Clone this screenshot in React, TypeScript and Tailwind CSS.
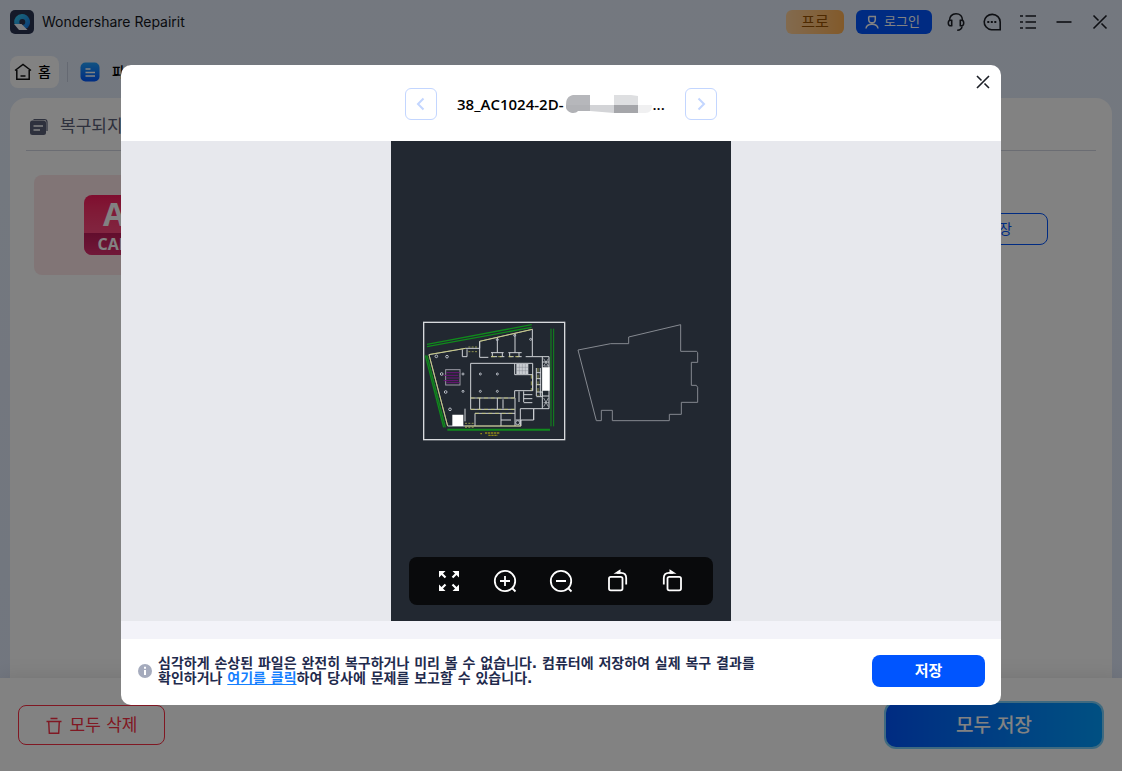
import type { ReactNode } from "react";

type IconButtonProps = {
    label: string;
    className?: string;
    children: ReactNode;
};

const IconButton = ({ label, className = "", children }: IconButtonProps) => (
    <button type="button" aria-label={label} className={`flex size-6 items-center justify-center ${className}`}>
        <svg viewBox="0 0 24 24" className="size-6" fill="none" stroke="currentColor" strokeWidth="1.6">
            {children}
        </svg>
    </button>
);

const Logo = () => (
    <svg viewBox="0 0 24 24" className="size-6">
        <defs>
            <linearGradient id="logoRing" x1="0" y1="0" x2="1" y2="1">
                <stop offset="0" stopColor="#38d6f5" />
                <stop offset="1" stopColor="#1370e8" />
            </linearGradient>
        </defs>
        <rect width="24" height="24" rx="5" fill="#2a3352" />
        <path d="M12 4a8 8 0 0 1 6 13.300l-2.600 1.700L4.200 13.500A8 8 0 0 1 12 4Z" fill="url(#logoRing)" />
        <circle cx="12.300" cy="12" r="3" fill="#2a3352" />
        <path d="M4 14h7.500l6 6h-8.500Z" fill="#f4f7ff" />
    </svg>
);

const TitleBar = () => (
    <header className="flex h-11 items-center justify-between px-[10px]">
        <div className="flex items-center gap-2">
            <Logo />
            <h1 className="font-['Inter','Liberation_Sans',sans-serif] text-sm text-[#15171c]">Wondershare Repairit</h1>
        </div>
        <div className="flex items-center gap-3 text-[#1c1f26]">
            <button type="button" className="h-6 w-[58px] rounded-md bg-linear-to-r from-[#ffd19a] to-[#ffb052] text-[15px] leading-6 text-[#9a5200]">
                프로
            </button>
            <button type="button" className="flex h-6 w-[76px] items-center justify-center gap-1 rounded-md bg-[#0055ff] pr-1 text-[13px] leading-6 text-white">
                <svg viewBox="0 0 16 16" className="size-4" fill="none" stroke="currentColor" strokeWidth="1.500">
                    <path d="M4.700 2.500h7.300M4.700 2.500v3a3.300 3.300 0 0 0 6.600 0v-3M2 14.500c.3-3 2.600-4.300 6-4.300s5.700 1.300 6 4.300" />
                </svg>
                로그인
            </button>
            <IconButton label="고객 지원">
                <path d="M5.500 10.500C5.500 6.500 8 3.800 12 3.800s6.500 2.700 6.500 6.700" />
                <path d="M7.700 10.300v5.400c-2.300.4-3.400-.6-3.400-2.700s1.100-3.100 3.400-2.700ZM16.300 10.300v5.400c2.300.4 3.400-.6 3.400-2.700s-1.100-3.100-3.400-2.700Z" />
                <path d="M18 16.500c-.3 2.400-1.500 3.700-4.800 3.700" />
            </IconButton>
            <IconButton label="피드백">
                <path d="M20.200 19.700H11.500a8 7.700 0 1 1 8.700-7.700Z" />
                <path d="M7.300 12h2M10.800 12h2M14.300 12h2" strokeWidth="1.900" />
            </IconButton>
            <IconButton label="메뉴">
                <path d="M4 6h3M9.500 6H20M4 12h3M9.500 12H20M4 18h3M9.500 18H20" strokeWidth="1.700" />
            </IconButton>
            <IconButton label="최소화">
                <path d="M4.500 12h15" />
            </IconButton>
            <IconButton label="닫기">
                <path d="m5.500 18.500 13-13M5.500 5.500l5 5M13.500 13.500l5 5" />
            </IconButton>
        </div>
    </header>
);

const Tabs = () => (
    <nav className="flex items-center px-[10px] pt-3 pb-[10px] text-sm font-medium text-black">
        <button type="button" className="flex h-8 w-[49px] items-center gap-[6px] rounded-lg bg-white pl-1">
            <svg viewBox="0 0 18 18" className="size-[18px] shrink-0" fill="none" stroke="#111" strokeWidth="1.500">
                <path d="M1 7.500 9 1.500l8 6M2.800 7v9.300h12.400V7M6.500 13h5" />
            </svg>
            홈
        </button>
        <span className="mx-2 h-5 w-px bg-[#c6cfe0]" />
        <button type="button" className="flex items-center gap-3 pl-1">
            <svg viewBox="0 0 20 20" className="size-5">
                <defs>
                    <linearGradient id="fileTab" x1="0" y1="0" x2="0" y2="1">
                        <stop offset="0" stopColor="#22a2ff" />
                        <stop offset="1" stopColor="#0058ff" />
                    </linearGradient>
                </defs>
                <rect x=".5" y=".5" width="19" height="19" rx="5" fill="url(#fileTab)" />
                <path d="M5.500 7h5M5.500 10.500h9.500M5.500 14h9.500" stroke="#fff" strokeWidth="1.500" />
            </svg>
            파일 복구
        </button>
    </nav>
);

const FileList = () => (
    <main className="mx-[10px] flex-1 rounded-t-2xl bg-white px-4 pt-3">
        <div className="flex h-[41px] items-center gap-3 border-b border-[#d3d6e2] pb-[6px] pl-1 text-[17px] text-[#5b6078]">
            <svg viewBox="0 0 18 18" className="size-[18px]">
                <path d="M3.500 1.500h11a2.500 2.500 0 0 1 2.500 2.500v9" fill="none" stroke="#5b6078" strokeWidth="1.200" />
                <rect y="2.500" width="16" height="14.500" rx="2.500" fill="#5b6078" />
                <path d="M3.500 8h9.500M3.500 12h6.500" stroke="#fff" strokeWidth="1.600" />
            </svg>
            복구되지 않은 파일
        </div>
        <div className="flex items-start justify-between pt-6 pr-12 pl-2">
            <div className="flex h-[100px] w-40 items-center justify-center rounded-lg bg-[#fde6e8]">
                <div className="flex size-[60px] flex-col rounded-lg bg-linear-to-b from-[#fa1a5c] to-[#ff5b92] text-center font-['Open_Sans',sans-serif] font-bold text-white">
                    <span className="text-[32px] leading-[38px]">A</span>
                    <span className="rounded-b-lg bg-linear-to-b from-[#c01a58] to-[#de3070] text-base leading-[22px]">CAD</span>
                </div>
            </div>
            <button type="button" className="mt-[38px] h-8 w-[98px] rounded-lg border border-[#0055ff] text-sm text-[#0055ff]">
                저장
            </button>
        </div>
    </main>
);

const ActionBar = () => (
    <footer className="z-10 flex h-[93px] items-center justify-between bg-white px-[18px] shadow-[0_0_20px_rgba(0,0,0,0.12)]">
        <button type="button" className="flex h-10 w-[147px] items-center justify-center gap-2 rounded-lg border border-[#fb2f45] pt-[2px] text-[17px] text-[#fb2f45]">
            <svg viewBox="0 0 16 18" className="h-[18px] w-4" fill="none" stroke="currentColor" strokeWidth="1.400">
                <path d="M4.500 1.500h7M.5 4.500h15M2.700 4.500l.6 11.800h9.400l.6-11.800" />
            </svg>
            모두 삭제
        </button>
        <button type="button" className="h-12 w-[220px] rounded-xl bg-[#7cd0fb] p-[2px] text-[19px] font-medium text-white">
            <span className="flex h-full items-center justify-center rounded-[10px] bg-linear-to-r from-[#0055ff] to-[#009dff] pt-[2px]">모두 저장</span>
        </button>
    </footer>
);

// floor plan on the left sheet, building outline on the right
const Drawing = () => (
    <svg viewBox="0 0 876 408" className="h-[136px] w-[292px] shrink-0" fill="none" strokeWidth="3" role="img" aria-label="CAD">
        <rect x="26" y="31" width="423" height="352" stroke="#d8dadd" strokeWidth="4" />
        <g stroke="#108a1c" strokeWidth="3">
            <path d="M36 97 350 38M36 104l314-58" strokeWidth="4" />
            <path d="m31 130 55 216M36 130l55 216" strokeWidth="4" />
            <path d="M408 50v293M416 50v293" />
            <path d="M97 353h308" strokeWidth="6" />
        </g>
        <g stroke="#cfd2d6">
            <path d="M42 128 152 109h42V88L352 52v82M352 134h50v156h-46v34h-38v18H98L42 128" />
            <path d="M194 88v48h26M247 76v46M300 64v58M228 122h38M280 122h40M228 134h18M254 134h14M282 134h14M304 134h16M232 122v12M262 122v12M284 122v12M312 122v12M352 134h-20M142 112v22h14v-22" />
            <path d="M167 154h186v82H299v22H167ZM299 154v34h54M353 188v48" />
            <path d="M167 258v34h132M194 258v34M247 258v34M264 262v28M150 290v38M180 304v38M180 304h120M258 304v38M300 258v84M258 324h30M302 324h14v18M316 290v52M316 290h40" />
            <path d="M312 238v32M326 238v32M326 248h26M326 260h26M326 272h26M364 168v84M376 168v84M364 182h14M364 200h14M364 218h14M364 240h18v14h-18M382 134v156M382 150h20M382 252h20M356 290v34" />
            <path d="M386 140l14 22M400 140l-14 22M386 258l14 26M400 258l-14 26M386 162h16M386 272h16" strokeWidth="2" />
            <rect x="92" y="173" width="43" height="46" stroke="#9a9aa4" />
        </g>
        <g stroke="#c6c75e" strokeWidth="2">
            <path d="m42 128 56 214M44 127l108-18M194 88l158-36M150 342h168" />
            <path d="M228 134h38M280 134h40M167 258h132M167 292h132M180 304h120M349 188v48M369 168v84" strokeDasharray="12 8" />
            <path d="M160 105h30M160 119h30M150 334h28M150 346h28" strokeDasharray="6 4" />
        </g>
        <path d="M94 182h40M86 190h44M94 198h40M86 206h44M94 212h40" stroke="#6d147a" />
        <path d="M112 308h33v34h-33ZM382 166h22v70h-22Z" fill="#fff" />
        <path d="M304 156h36v30h-36Z" fill="#c9cdd2" />
        <path d="M313 156v30M322 156v30M331 156v30M304 166h36M304 176h36" stroke="#6a7078" strokeWidth="1" />
        <g stroke="#b9bec6" strokeWidth="3">
            <circle cx="64" cy="133" r="4" />
            <circle cx="96" cy="134" r="4" />
            <circle cx="80" cy="186" r="4" />
            <circle cx="92" cy="240" r="4" />
            <circle cx="105" cy="292" r="4" />
            <circle cx="144" cy="186" r="3" />
            <circle cx="144" cy="238" r="3" />
            <circle cx="196" cy="186" r="3" />
            <circle cx="247" cy="186" r="3" />
            <circle cx="196" cy="238" r="3" />
            <circle cx="247" cy="238" r="3" />
            <circle cx="247" cy="83" r="3" />
            <circle cx="299" cy="70" r="3" />
            <circle cx="347" cy="82" r="3" />
            <circle cx="308" cy="332" r="6" />
        </g>
        <path d="M196 365h5M210 363h44M220 370h28" stroke="#8f8718" strokeWidth="4" strokeDasharray="7 2" />
        <path
            d="M489 114 587 95h54V75l156-37v80h48l3 4v29h-19v69h15l4 6v45h-49v36h-36v19H592v-31h-33v31h-15Z"
            stroke="#858990"
        />
    </svg>
);

const PreviewTools = () => (
    <div className="flex h-12 w-[304px] items-center justify-center gap-8 rounded-lg bg-[#090a0c] text-white">
        <IconButton label="전체 화면">
            <path d="m3.500 3.500 5 5M20.500 3.500l-5 5M3.500 20.500l5-5M20.500 20.500l-5-5" strokeWidth="2.200" />
            <path d="M2 2h6.500L2 8.500ZM22 2h-6.500L22 8.500ZM2 22h6.500L2 15.500ZM22 22h-6.500l6.500-6.500Z" fill="currentColor" stroke="none" />
        </IconButton>
        <IconButton label="확대">
            <circle cx="12" cy="12" r="10.200" strokeWidth="1.800" />
            <path d="M7 12h10M12 7v10M19 19l3.500 3.500" strokeWidth="1.800" />
        </IconButton>
        <IconButton label="축소">
            <circle cx="12" cy="12" r="10.200" strokeWidth="1.800" />
            <path d="M7 12h10M19 19l3.500 3.500" strokeWidth="1.800" />
        </IconButton>
        <IconButton label="왼쪽으로 회전">
            <rect x="4" y="7.800" width="13.500" height="13.500" rx="1.800" strokeWidth="1.800" />
            <path d="M12 3.900h4c3.500 0 5.200 1.700 5.200 5.200v6.400" strokeWidth="1.800" />
            <path d="M8.500 4.800 15.500.300v4.500Z" fill="currentColor" stroke="none" />
        </IconButton>
        <IconButton label="오른쪽으로 회전">
            <rect x="6.500" y="7.800" width="13.500" height="13.500" rx="1.800" strokeWidth="1.800" />
            <path d="M12 3.900H8c-3.500 0-5.200 1.700-5.200 5.200v6.400" strokeWidth="1.800" />
            <path d="M15.500 4.800 8.500.300v4.500Z" fill="currentColor" stroke="none" />
        </IconButton>
    </div>
);

const PreviewDialog = () => (
    <div className="fixed inset-0 z-20 flex items-center justify-center bg-black/49 pb-px">
        <section role="dialog" aria-modal="true" className="relative w-full max-w-[880px] overflow-hidden rounded-[10px] bg-white">
            <div className="flex h-[76px] items-center justify-center gap-5 pt-[2px]">
                <IconButton label="이전" className="size-8! rounded-md border border-[#c3d6ff] text-[#c3d6ff]">
                    <path d="m14.500 6.500-5.500 5.500 5.500 5.500" strokeWidth="2" />
                </IconButton>
                <h2 className="flex w-52 items-center font-['Open_Sans','Noto_Sans',sans-serif] text-[15px] leading-5 font-semibold whitespace-nowrap text-black">
                    38_AC1024-2D-
                    <svg viewBox="0 0 86 20" className="ml-[3px] h-5 w-[86px] shrink-0">
                        <path d="M7 1h17v10H0C0 5 2 2 7 1Z" fill="#b6b7bb" />
                        <path d="M0 11h24v6H12c-2 3-10 3-12-3Z" fill="#b1b2b6" />
                        <path d="M24 11h24v8l-24-2Z" fill="#d3d4d7" />
                        <path d="M48 1h17l7 1v9H48Z" fill="#dedfe1" />
                        <path d="M48 11h24v8H48Z" fill="#a5a6aa" />
                        <path d="M72 11h14c0 5-2 8-7 8h-7Z" fill="#f0f0f1" />
                    </svg>
                    ...
                </h2>
                <IconButton label="다음" className="size-8! rounded-md border border-[#c3d6ff] text-[#c3d6ff]">
                    <path d="m9.500 6.500 5.500 5.500-5.500 5.500" strokeWidth="2" />
                </IconButton>
            </div>
            <IconButton label="미리보기 닫기" className="absolute top-[5px] right-[6px] text-[#1c1f26]">
                <path d="m6 18 12-12M6 6l4.500 4.500M13.500 13.500 18 18" />
            </IconButton>
            <div className="flex justify-center bg-[#e7e8ed]">
                <div className="flex h-[480px] w-[340px] flex-col items-center justify-between bg-[#222831] pt-[171px] pb-4">
                    <Drawing />
                    <PreviewTools />
                </div>
            </div>
            <div className="h-[18px] bg-[#f3f3f9]" />
            <div className="flex h-[66px] items-center justify-between pr-4 pb-[2px] pl-[17px]">
                <div className="flex items-center gap-[6px]">
                    <svg viewBox="0 0 14 14" className="size-[14px] shrink-0">
                        <circle cx="7" cy="7" r="7" fill="#a5abbd" />
                        <path d="M7 2.800v1.900M7 6v5" stroke="#fff" strokeWidth="2" />
                    </svg>
                    <p className="text-sm leading-[15px] font-bold text-[#1f2b4d]">
                        심각하게 손상된 파일은 완전히 복구하거나 미리 볼 수 없습니다. 컴퓨터에 저장하여 실제 복구 결과를
                        <br />
                        확인하거나{" "}
                        <a href="#" className="text-[#1580ff] underline">
                            여기를 클릭
                        </a>
                        하여 당사에 문제를 보고할 수 있습니다.
                    </p>
                </div>
                <button type="button" className="h-8 w-[113px] rounded-lg bg-[#0055ff] text-[15px] font-bold text-white">
                    저장
                </button>
            </div>
        </section>
    </div>
);

const App = () => {
    return (
        <div className="flex min-h-screen flex-col bg-linear-to-b from-[#e3ecfa] to-[#dfe8fa] font-['DejaVu_Sans','Noto_Sans_CJK_KR',sans-serif]">
            <TitleBar />
            <Tabs />
            <FileList />
            <ActionBar />
            <PreviewDialog />
        </div>
    );
};

export default App;
